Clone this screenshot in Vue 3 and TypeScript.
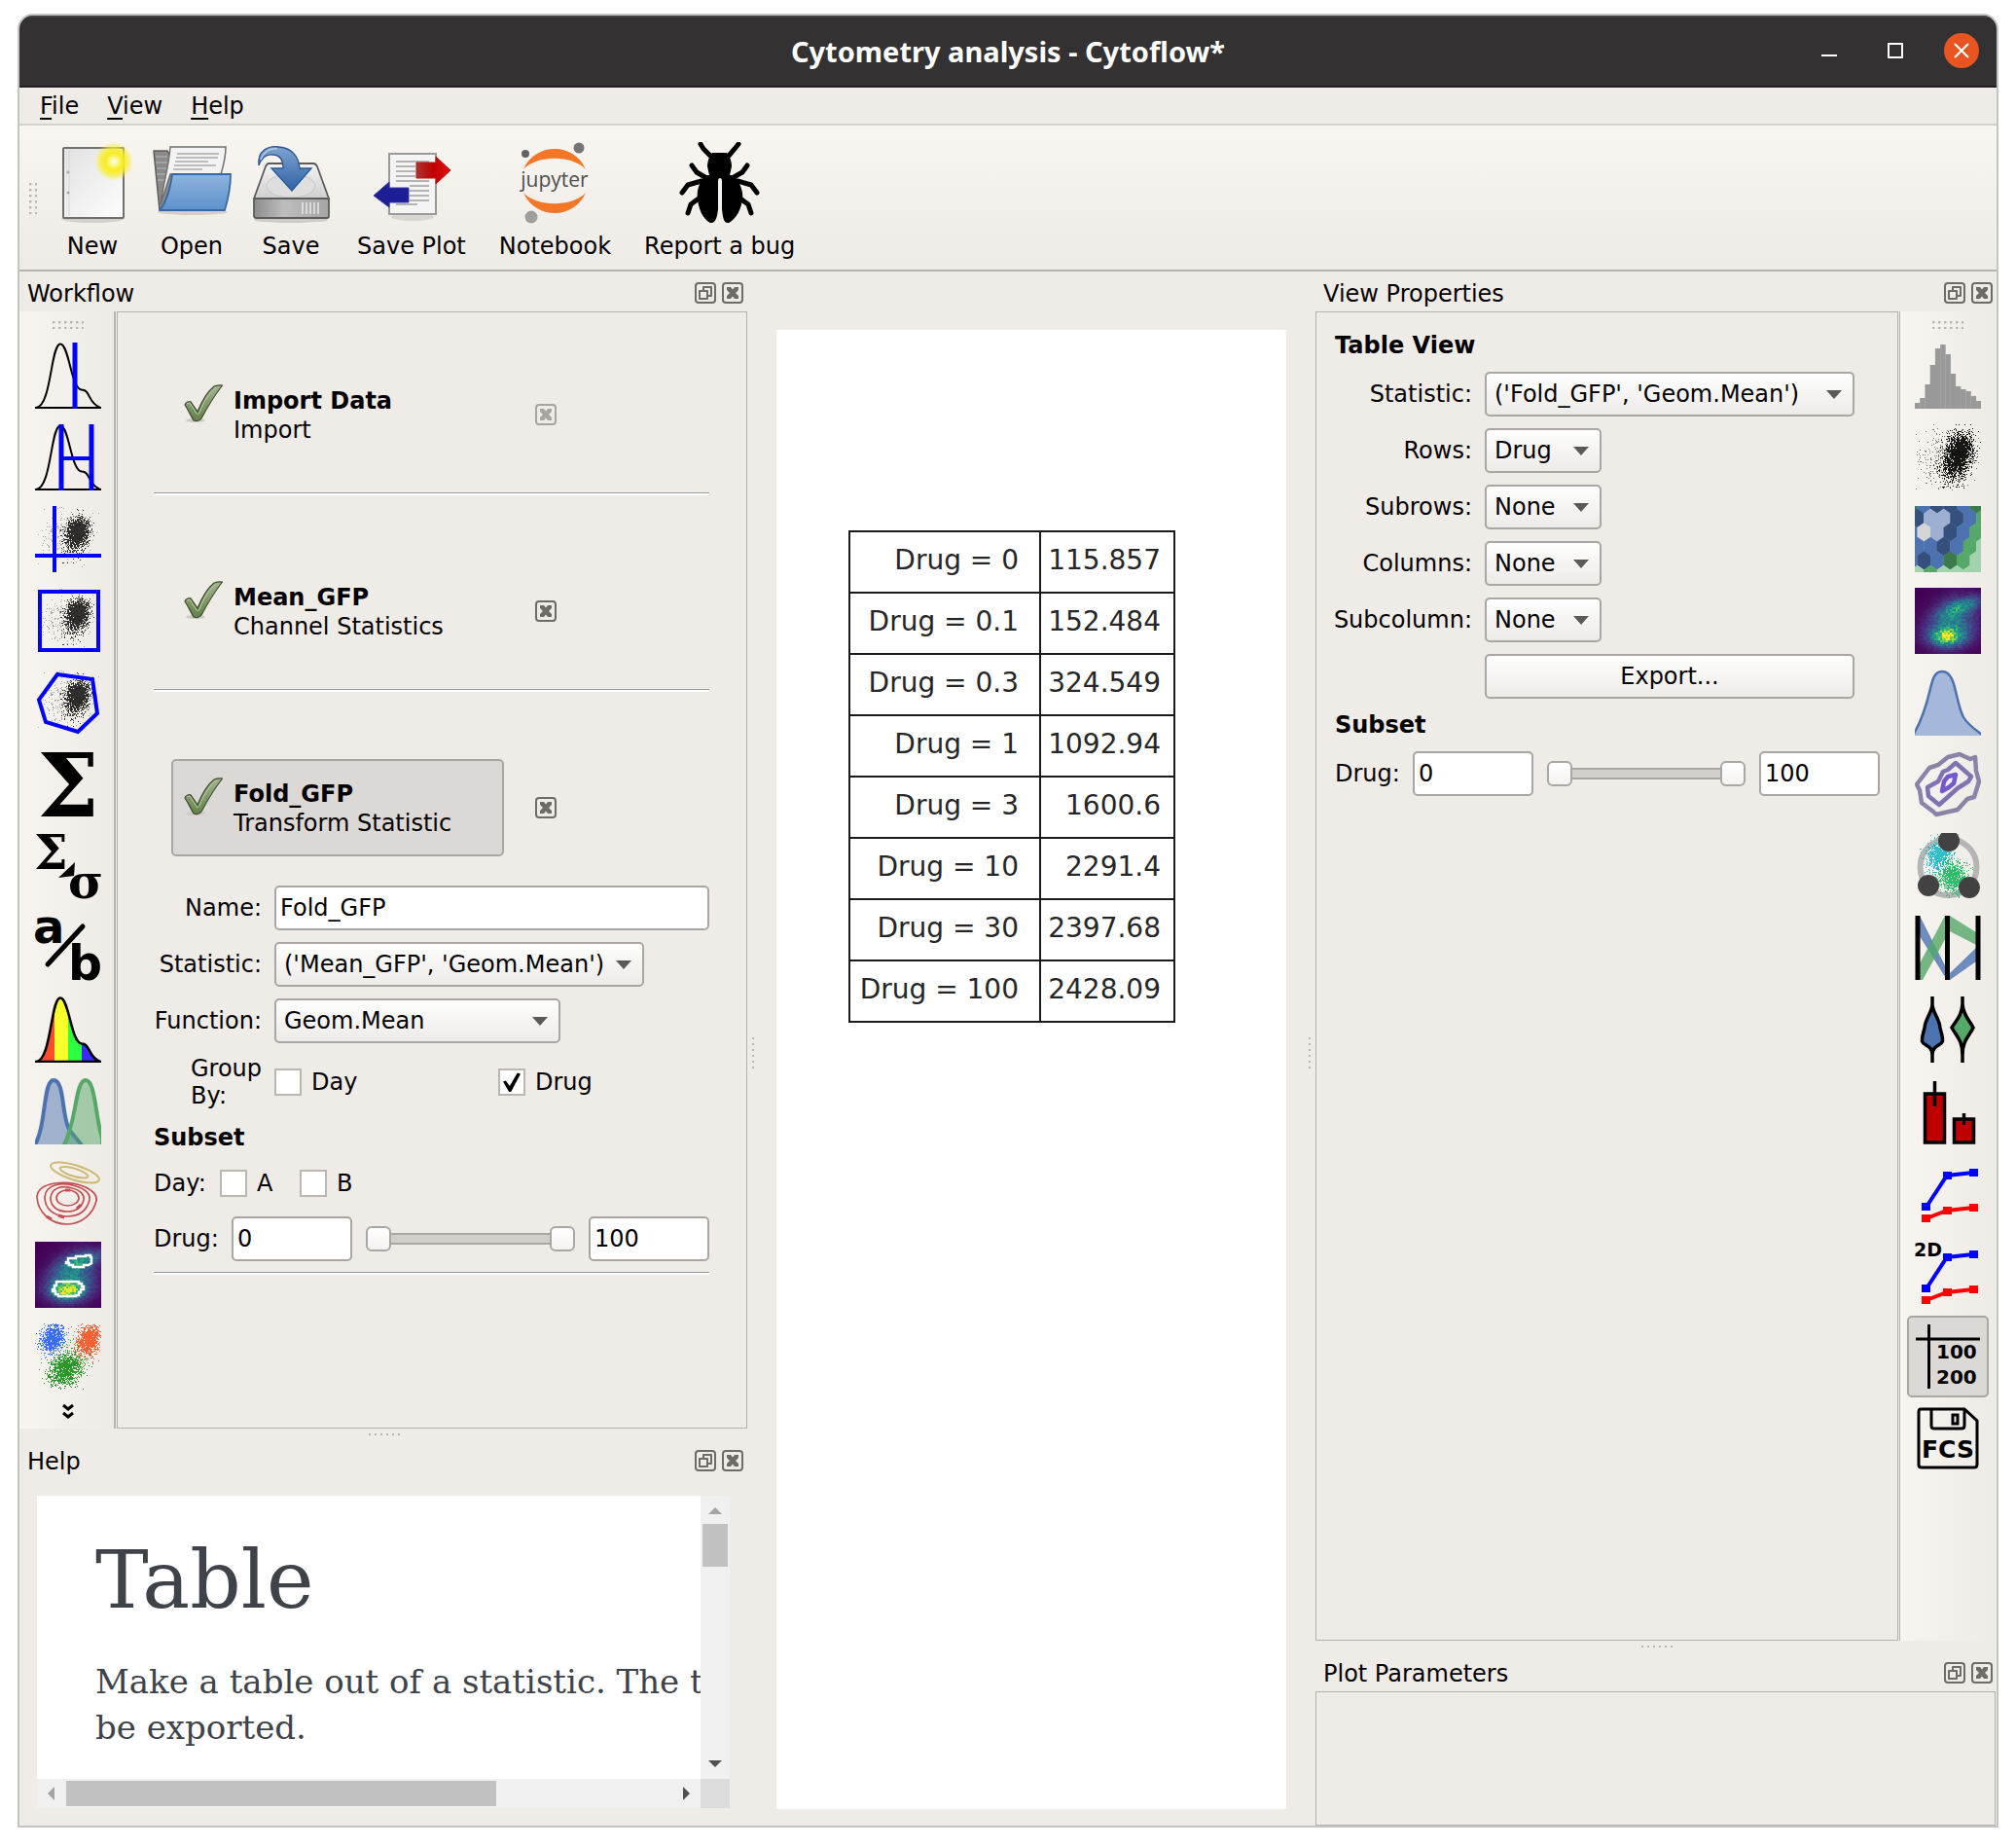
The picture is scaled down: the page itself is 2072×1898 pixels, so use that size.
<script setup lang="ts">
import { ref } from 'vue'

interface Step {
  title: string
  kind: string
  locked: boolean
}

const steps: Step[] = [
  { title: 'Import Data', kind: 'Import', locked: true },
  { title: 'Mean_GFP', kind: 'Channel Statistics', locked: false },
  { title: 'Fold_GFP', kind: 'Transform Statistic', locked: false },
]
const selectedStep = ref(2)

const results: [string, string][] = [
  ['Drug = 0', '115.857'],
  ['Drug = 0.1', '152.484'],
  ['Drug = 0.3', '324.549'],
  ['Drug = 1', '1092.94'],
  ['Drug = 3', '1600.6'],
  ['Drug = 10', '2291.4'],
  ['Drug = 30', '2397.68'],
  ['Drug = 100', '2428.09'],
]

const facets = [
  { id: 'rows', label: 'Rows:', value: 'Drug' },
  { id: 'subrows', label: 'Subrows:', value: 'None' },
  { id: 'columns', label: 'Columns:', value: 'None' },
  { id: 'subcolumn', label: 'Subcolumn:', value: 'None' },
]

const operations = [
  'Threshold', 'Range', 'Quad', 'Range 2D', 'Polygon', 'Channel Statistics', 'Transform Statistic',
  'Ratio', 'Bleedthrough', 'Gaussian Mixture 1D', 'Gaussian Mixture 2D', 'Density Gate', 'K-Means',
]
const views = [
  'Histogram', 'Scatter Plot', 'Hexbin', 'Density Plot', '1D Kernel Density', '2D Kernel Density', 'Radviz',
  'Parallel Coordinates', 'Violin Plot', 'Bar Chart', '1D Statistics', '2D Statistics', 'Table', 'Export FCS',
]

// Small deterministic generator so the event clouds look the same on each load.
function makeRandom(seed: number): () => number {
  let s = seed
  return () => {
    s = (s * 1664525 + 1013904223) % 4294967296
    return s / 4294967296
  }
}

function cloud(seed: number, n: number, cx: number, cy: number, sx: number, sy: number, tilt: number, size = 1): string {
  const rnd = makeRandom(seed)
  const gauss = () => Math.sqrt(-2 * Math.log(rnd() + 1e-9)) * Math.cos(2 * Math.PI * rnd())
  let d = ''
  for (let i = 0; i < n; i++) {
    const v = gauss()
    const x = cx + sx * gauss() - tilt * sx * v
    const y = cy + sy * v
    if (x < 0 || x > 67 || y < 0 || y > 67) continue
    d += `M${Math.round(x)} ${Math.round(y)}h${size}v${size}h-${size}z`
  }
  return d
}

const eventsDense = cloud(7, 900, 42, 30, 6, 9, 0.25) + cloud(8, 700, 45, 24, 5, 6, 0.1)
const eventsSparse = cloud(21, 300, 32, 32, 14, 12, 0.1)
const scatterDense = cloud(5, 1300, 42, 35, 7, 12, 0.25) + cloud(6, 1000, 47, 26, 6, 8, 0.1)
const scatterSparse = cloud(33, 380, 32, 34, 16, 14, 0.1)
const blueCloud = cloud(11, 900, 18, 15, 6, 7, 0.15)
const orangeCloud = cloud(12, 1100, 54, 17, 6, 8, 0.15)
const greenCloud = cloud(13, 1300, 31, 47, 8, 9, 0.2)
const cyanCloud = cloud(14, 900, 25, 21, 6, 8, 0.3)
const limeCloud = cloud(15, 1000, 39, 45, 7, 8, -0.1)

const viridis = [[68, 1, 84], [72, 40, 120], [62, 74, 137], [49, 104, 142], [38, 130, 142], [31, 158, 137], [53, 183, 121], [109, 205, 89], [180, 222, 44], [253, 231, 37]]
interface Cell { x: number; y: number; fill: string }
function density(seed: number): Cell[] {
  const rnd = makeRandom(seed)
  const cells: Cell[] = []
  const bump = (x: number, y: number, cx: number, cy: number, sx: number, sy: number, k: number) => {
    const u = x - cx
    const v = y - cy + k * u
    return Math.exp(-(u * u) / (2 * sx * sx) - (v * v) / (2 * sy * sy))
  }
  for (let y = 0; y < 68; y += 2) {
    for (let x = 0; x < 68; x += 2) {
      const base = 0.55 * bump(x, y, 32, 50, 9, 5, 0) + 0.3 * bump(x, y, 34, 48, 16, 9, 0)
        + 0.32 * bump(x, y, 48, 18, 15, 5, 0.3) + 0.38 * bump(x, y, 38, 32, 16, 15, 0.25)
      const t = Math.max(0, Math.min(0.999, base * (0.75 + 0.5 * rnd())))
      const p = t * 9
      const i = Math.floor(p)
      const c = viridis[i].map((a, k) => Math.round(a + (viridis[Math.min(9, i + 1)][k] - a) * (p - i)))
      cells.push({ x, y, fill: `rgb(${c.join(',')})` })
    }
  }
  return cells
}
const densityView = density(3)
const densityGate = density(9)

const histogram = [6, 11, 25, 45, 62, 66, 56, 36, 23, 20, 18, 13, 8]

const hexColours: Record<string, string> = { d: '#3b7a4a', b: '#4c72b0', n: '#35507d', l: '#9db0d3', y: '#d5d5d5', g: '#55a868', p: '#a3d2af' }
const hexRows = ['dbnnbd', 'nllnbg', 'bylnbg', 'bbnbgp', 'bnbdgp', 'pgpppp']
const hexes = hexRows.flatMap((row, r) => [...row].map((c, i) => {
  const cx = (r % 2 ? 2.6 : -4.1) + i * 13.5
  const cy = -2 + r * 14.5
  return {
    fill: hexColours[c],
    points: `${cx},${cy - 9.8} ${cx + 6.9},${cy - 4.9} ${cx + 6.9},${cy + 4.9} ${cx},${cy + 9.8} ${cx - 6.9},${cy + 4.9} ${cx - 6.9},${cy - 4.9}`,
  }
}))

const bell = 'M1 67C17 66 16 1.500 26 1.500C35 1.500 37 48 48 48.500C57 48.500 54 62 67 67'
</script>

<template>
  <div class="page">
    <svg class="defs" aria-hidden="true">
      <defs>
        <symbol id="ic-close" viewBox="0 0 22 22">
          <rect x="1" y="1" width="20" height="20" rx="3" fill="none" stroke="currentColor" stroke-width="2" />
          <path d="M5 5h4l2 2.500 2-2.500h4v3l-3 3 3 3v3h-4l-2-2.500-2 2.500h-4v-3l3-3-3-3z" fill="currentColor" />
        </symbol>
        <symbol id="ic-float" viewBox="0 0 22 22">
          <rect x="1" y="1" width="20" height="20" rx="3" fill="none" stroke="currentColor" stroke-width="2" />
          <path d="M9 8V5h8v9h-3M5 9h8v8H5z" fill="none" stroke="currentColor" stroke-width="2" stroke-linejoin="round" />
        </symbol>
        <symbol id="ic-check" viewBox="0 0 40 40">
          <ellipse cx="12" cy="37" rx="10" ry="2" fill="#cfccc8" />
          <path d="M1 21C2 18 6 17 7 18L14 28C19 16 26 6 31 2C34 1 37 .800 39.500 1C31 12 26 20 18 35C16 38 13 38 10 37C7 32 5 27 1 21Z" fill="url(#checkFill)" stroke="#3b4a30" stroke-width="1.200" />
          <path d="M3 20l3-1 7 11c1 1 2 1 3-1 5-12 10-20 17-26" fill="none" stroke="#b9caa6" stroke-width="1" />
        </symbol>
        <linearGradient id="checkFill" x1="0" y1="0" x2="0" y2="1">
          <stop offset="0" stop-color="#a3b48e" /><stop offset="1" stop-color="#648248" />
        </linearGradient>
        <linearGradient id="paper" x1="0" y1="0" x2="1" y2="1">
          <stop offset="0" stop-color="#e2e2e2" /><stop offset="1" stop-color="#fdfdfd" />
        </linearGradient>
        <radialGradient id="glow">
          <stop offset="0" stop-color="#fff" /><stop offset=".2" stop-color="#fdf78a" /><stop offset=".45" stop-color="#f9ec1e" /><stop offset=".7" stop-color="#f8ee30" stop-opacity=".75" /><stop offset="1" stop-color="#f8ee30" stop-opacity="0" />
        </radialGradient>
        <linearGradient id="folder" x1="0" y1="0" x2="0" y2="1">
          <stop offset="0" stop-color="#8db4de" /><stop offset="1" stop-color="#5d91cb" />
        </linearGradient>
        <linearGradient id="drive" x1="0" y1="0" x2="0" y2="1">
          <stop offset="0" stop-color="#f4f4f4" /><stop offset="1" stop-color="#cfcfcf" />
        </linearGradient>
        <linearGradient id="driveFront" x1="0" y1="0" x2="1" y2="0">
          <stop offset="0" stop-color="#8c8c8c" /><stop offset=".4" stop-color="#bdbdbd" /><stop offset="1" stop-color="#a5a5a5" />
        </linearGradient>
        <linearGradient id="arrowBlue" x1="0" y1="0" x2="0" y2="1">
          <stop offset="0" stop-color="#7ea4d0" /><stop offset="1" stop-color="#2f62a6" />
        </linearGradient>
        <linearGradient id="redArrow" x1="0" y1="0" x2="1" y2="0">
          <stop offset="0" stop-color="#a33" /><stop offset=".5" stop-color="#c00000" /><stop offset="1" stop-color="#e01010" />
        </linearGradient>
        <clipPath id="tile"><rect width="68" height="68" /></clipPath>
        <clipPath id="bellClip"><path :d="bell + 'z'" /></clipPath>
      </defs>
    </svg>

    <div class="window">
      <header class="titlebar">
        <h1>Cytometry analysis - Cytoflow*</h1>
        <div class="winbtns">
          <button type="button" aria-label="Minimize"><svg width="36" height="38" viewBox="0 0 36 38"><path d="M10 24h16" stroke="#fff" stroke-width="2" /></svg></button>
          <button type="button" aria-label="Maximize"><svg width="36" height="38" viewBox="0 0 36 38"><rect x="11" y="12" width="14" height="14" fill="none" stroke="#fff" stroke-width="2" /></svg></button>
          <button type="button" aria-label="Close"><svg width="36" height="38" viewBox="0 0 36 38"><circle cx="18" cy="19" r="18" fill="#e95420" /><path d="M11 12l14 14M25 12l-14 14" stroke="#fff" stroke-width="2.200" /></svg></button>
        </div>
      </header>

      <nav class="menubar">
        <a href="#"><u>F</u>ile</a>
        <a href="#"><u>V</u>iew</a>
        <a href="#"><u>H</u>elp</a>
      </nav>

      <div class="toolbar">
        <span class="grip tall"></span>
        <button type="button">
          <svg width="84" height="84" viewBox="0 0 84 84">
            <ellipse cx="42" cy="79" rx="32" ry="4" fill="#d3d0cc" />
            <rect x="12" y="6" width="62" height="72" rx="1" fill="url(#paper)" stroke="#6f6f6f" stroke-width="2" />
            <path d="M18 8v68" stroke="#d5d5d5" /><circle cx="17" cy="31" r="1.500" fill="#aaa" /><circle cx="17" cy="52" r="1.500" fill="#aaa" />
            <circle cx="64" cy="20" r="20" fill="url(#glow)" />
          </svg>
          <span>New</span>
        </button>
        <button type="button">
          <svg width="84" height="84" viewBox="0 0 84 84">
            <ellipse cx="43" cy="72" rx="36" ry="3" fill="#d3d0cc" />
            <path d="M3 9h14l3 5h10l-18 56H9z" fill="#8b8b8b" stroke="#5c5c5c" stroke-width="1.500" />
            <path d="M5 15h12M5 21h12M6 27h12M6 33h11M7 39h9" stroke="#b9b9b9" />
            <path d="M20 5h57c0 10-2 18-5 28H20L10 64C13 42 19 22 20 5z" fill="#f3f3f3" stroke="#707070" stroke-width="1.500" />
            <path d="M27 12h43M26 16h43M25 20h34M24 24h43M23 28h30" stroke="#aaa" stroke-width="1.500" />
            <path d="M22 33h60c0 13-3 27-6 37H9c7-8 11-23 13-37z" fill="url(#folder)" stroke="#3568a5" stroke-width="1.800" stroke-linejoin="round" />
          </svg>
          <span>Open</span>
        </button>
        <button type="button">
          <svg width="84" height="84" viewBox="0 0 84 84">
            <ellipse cx="42" cy="80" rx="38" ry="3" fill="#cfccc8" />
            <path d="M19 22h46c2 0 3 1 4 3l12 33H4l12-33c1-2 2-3 3-3z" fill="url(#drive)" stroke="#5c5c5c" stroke-width="1.800" />
            <ellipse cx="42" cy="45" rx="25" ry="12" fill="#dedede" stroke="#c5c5c5" />
            <rect x="4" y="58" width="77" height="20" rx="2" fill="url(#driveFront)" stroke="#5c5c5c" stroke-width="1.800" />
            <path d="M54 62v12M58 62v12M62 62v12M66 62v12M70 62v12" stroke="#e9e9e9" stroke-width="1.500" />
            <path d="M9 24C7 9 19 3 30 5c12 1 20 9 21 22h12L43 50 22 27h12c0-9-4-14-11-14-7-1-11 3-14 11z" fill="url(#arrowBlue)" stroke="#2c578f" stroke-width="1.300" />
            <path d="M11 18c3-8 9-12 17-11" fill="none" stroke="#b3cae6" stroke-width="1.500" />
          </svg>
          <span>Save</span>
        </button>
        <button type="button">
          <svg width="84" height="84" viewBox="0 0 84 84">
            <ellipse cx="43" cy="77" rx="22" ry="4" fill="#d9d6d2" />
            <rect x="19" y="12" width="48" height="62" fill="#f4f4f4" stroke="#999" stroke-width="2" />
            <path d="M26 20h34M26 25h20M26 30h20M26 35h20M26 40h34M40 45h20M40 50h20M40 55h20M40 60h20M26 64h22" stroke="#b3b3b3" stroke-width="2" />
            <path d="M47 21h20v-6l15 14-15 14v-6H47z" fill="url(#redArrow)" stroke="#b01818" />
            <path d="M39 47H19v-6L3 55l16 12v-5h20z" fill="#1d1d96" stroke="#3838a8" />
          </svg>
          <span>Save Plot</span>
        </button>
        <button type="button">
          <svg width="84" height="84" viewBox="0 0 84 84">
            <path d="M10 28C22 0 62 0 74 28C60 13 24 13 10 28z" fill="#f37726" />
            <path d="M10 52C22 80 62 80 74 52C60 67 24 67 10 52z" fill="#f37726" />
            <circle cx="12" cy="12" r="4" fill="#616262" /><circle cx="67" cy="6" r="5.500" fill="#767677" /><circle cx="18" cy="77" r="6.500" fill="#9e9e9e" />
            <text x="42" y="46" text-anchor="middle" font-family="Open Sans, sans-serif" font-size="21" fill="#4e4e4e">jupyter</text>
          </svg>
          <span>Notebook</span>
        </button>
        <button type="button">
          <svg width="84" height="84" viewBox="0 0 84 84">
            <path d="M22 2l3 5 7 7M61 2l-4 5-6 7" fill="none" stroke="#000" stroke-width="5" stroke-linecap="round" />
            <path d="M13 24l5 7 12 7M70 24l-5 7-12 7M3 52l6-8 14-4M80 52l-6-8-14-4M9 73l3-9 12-9M74 73l-3-9-12-9" fill="none" stroke="#000" stroke-width="5" stroke-linecap="round" stroke-linejoin="round" />
            <path d="M34 11h15c3 3 5 9 5 14l-2 9H31l-2-9c0-5 2-11 5-14z" fill="#000" />
            <path d="M28 34h27c9 8 11 18 10 25-1 9-6 20-14 24-5 1-6-5-7-14V40c0-4-4-4-4 0v29c-1 9-3 15-8 14-8-4-12-15-13-24-1-7 0-17 9-25z" fill="#000" />
          </svg>
          <span>Report a bug</span>
        </button>
      </div>

      <main class="body">
        <div class="leftdock">
          <section class="grow">
            <div class="docktitle">
              <h2>Workflow</h2>
              <button type="button" aria-label="Float Workflow"><svg><use href="#ic-float" /></svg></button>
              <button type="button" aria-label="Close Workflow"><svg><use href="#ic-close" /></svg></button>
            </div>
            <div class="dockrow">
              <div class="sidebar leftbar">
                <span class="grip wide"></span>
                <button v-for="(name, i) in operations" :key="name" type="button" :aria-label="name">
                  <svg width="68" height="68" viewBox="0 0 68 68">
                    <g v-if="i === 0">
                      <path :d="bell + 'M0 67h68'" fill="none" stroke="#000" stroke-width="2" />
                      <path d="M41 0v68" stroke="#00f" stroke-width="5" />
                    </g>
                    <g v-else-if="i === 1">
                      <path :d="bell + 'M0 67h68'" fill="none" stroke="#000" stroke-width="2" />
                      <path d="M27 0v68M58 0v68" stroke="#00f" stroke-width="5" />
                      <path d="M27 35h31" stroke="#00f" stroke-width="4" />
                    </g>
                    <g v-else-if="i < 5">
                      <path :d="eventsSparse" opacity=".3" />
                      <path :d="eventsDense" opacity=".8" />
                      <path v-if="i === 2" d="M20 0v68M0 51h68" stroke="#00f" stroke-width="4" />
                      <rect v-else-if="i === 3" x="5" y="4" width="60" height="60" fill="none" stroke="#00f" stroke-width="4" />
                      <path v-else d="M23 5l36 5 5 35-20 19-33-10-7-23z" fill="none" stroke="#00f" stroke-width="4" />
                    </g>
                    <text v-else-if="i === 5" x="34" y="67" text-anchor="middle" class="serif bold" font-size="90">Σ</text>
                    <g v-else-if="i === 6">
                      <text x="-1" y="37" class="serif bold" font-size="49">Σ</text>
                      <path d="M24 46l17-16-1 14z" />
                      <text x="34" y="67" class="serif bold" font-size="49">σ</text>
                    </g>
                    <g v-else-if="i === 7">
                      <text x="-2" y="29" class="sans bold" font-size="48">a</text>
                      <text x="34" y="67" class="sans bold" font-size="49">b</text>
                      <path d="M13 51L49 12" stroke="#000" stroke-width="5" stroke-linecap="round" />
                    </g>
                    <g v-else-if="i === 8">
                      <g clip-path="url(#bellClip)">
                        <rect width="20" height="68" fill="#ff4a2b" /><rect x="20" width="14" height="68" fill="#f8ff2b" />
                        <rect x="34" width="14" height="68" fill="#2bff40" /><rect x="48" width="20" height="68" fill="#3a2bff" />
                      </g>
                      <path :d="bell + 'M0 67h68'" fill="none" stroke="#000" stroke-width="2.500" />
                    </g>
                    <g v-else-if="i === 9" stroke-width="4">
                      <path d="M-1 70C12 50 8 2 19 2C31 2 27 42 36 54L49 70" fill="#4c72b0" fill-opacity=".5" stroke="#4c72b0" />
                      <path d="M29 70C43 46 41 2 52 2C62 2 62 40 69 62V70" fill="#55a868" fill-opacity=".5" stroke="#55a868" />
                    </g>
                    <g v-else-if="i === 10" fill="none">
                      <g stroke="#ccb974" stroke-width="2" transform="rotate(17 41 13)"><ellipse cx="41" cy="13" rx="26" ry="7.500" /><ellipse cx="40" cy="13" rx="15" ry="4" /></g>
                      <g stroke="#c44e52" stroke-width="1.700">
                        <path d="M2 38C3 22 34 20 52 28C62 33 64 38 63 42C60 55 48 66 33 66C16 66 3 54 2 38z" />
                        <path d="M10 38C11 25 28 22 42 27C53 30 57 36 56 41C53 53 44 58 33 58C18 58 10 49 10 38z" />
                        <path d="M16 39C17 28 28 26 38 29C47 31 51 36 50 41C48 49 42 53 33 53C22 53 16 47 16 39z" />
                        <ellipse cx="33.500" cy="39" rx="11.500" ry="8" />
                        <path d="M12 58l5 3M24 57l6 2M43 50l4-4M31 31h5" stroke-width="3" />
                      </g>
                    </g>
                    <g v-else-if="i === 11">
                      <g shape-rendering="crispEdges"><rect v-for="(c, k) in densityGate" :key="k" :x="c.x" :y="c.y" width="2" height="2" :fill="c.fill" /></g>
                      <path d="M32 21h2v-4h8v-2h10v-1h5v2h1v6l-3 2h-5v2H39v-2h-4v-2h-3z M18 49h2v-4h2v-4h23v2h3v3h2v3h-3v3h-2v3h-3v1H24v-2h-3v-3h-3z" fill="none" stroke="#fff" stroke-width="2.500" />
                    </g>
                    <g v-else>
                      <path :d="blueCloud" fill="#0b4dff" opacity=".8" /><path :d="orangeCloud" fill="#ff3c05" opacity=".8" /><path :d="greenCloud" fill="#078a07" opacity=".85" />
                    </g>
                  </svg>
                </button>
                <button type="button" class="more" aria-label="More operations">
                  <svg width="12" height="18" viewBox="0 0 12 18"><path d="M1 2l5 4 5-4M1 10l5 4 5-4" fill="none" stroke="#000" stroke-width="3" /></svg>
                </button>
              </div>

              <div class="panel workflow">
                <template v-for="(s, i) in steps" :key="s.title">
                  <div class="step">
                    <button type="button" class="stepbtn" :class="{ selected: i === selectedStep }" @click="selectedStep = i">
                      <svg width="40" height="40"><use href="#ic-check" /></svg>
                      <span><b>{{ s.title }}</b><br>{{ s.kind }}</span>
                    </button>
                    <button type="button" class="close" :disabled="s.locked" :aria-label="'Remove ' + s.title"><svg><use href="#ic-close" /></svg></button>
                  </div>
                  <hr v-if="i < 2">
                </template>

                <form class="form opform" @submit.prevent>
                  <label for="op-name">Name:</label>
                  <input id="op-name" type="text" value="Fold_GFP">
                  <label for="op-stat">Statistic:</label>
                  <span class="combo stat"><select id="op-stat"><option>('Mean_GFP', 'Geom.Mean')</option></select></span>
                  <label for="op-fn">Function:</label>
                  <span class="combo fn"><select id="op-fn"><option>Geom.Mean</option></select></span>
                  <span class="groupby">Group By:</span>
                  <div class="pair">
                    <label class="tick"><input type="checkbox">Day</label>
                    <label class="tick"><input type="checkbox" checked>Drug</label>
                  </div>
                </form>
                <h3 class="opsubset">Subset</h3>
                <div class="dayrow">
                  <span>Day:</span>
                  <label class="tick"><input type="checkbox">A</label>
                  <label class="tick"><input type="checkbox">B</label>
                </div>
                <div class="rangerow oprange">
                  <label for="op-min">Drug:</label>
                  <input id="op-min" type="text" value="0">
                  <div class="slider">
                    <input type="range" min="0" max="100" value="0" aria-label="Drug minimum">
                    <input type="range" min="0" max="100" value="100" aria-label="Drug maximum">
                  </div>
                  <input type="text" value="100" aria-label="Drug upper bound">
                </div>
                <hr class="last">
              </div>
            </div>
          </section>

          <div class="hsplit"><span></span></div>

          <section class="help">
            <div class="docktitle">
              <h2>Help</h2>
              <button type="button" aria-label="Float Help"><svg><use href="#ic-float" /></svg></button>
              <button type="button" aria-label="Close Help"><svg><use href="#ic-close" /></svg></button>
            </div>
            <div class="browser">
              <article>
                <h2>Table</h2>
                <p>Make a table out of a statistic. The t<br>be exported.</p>
              </article>
              <div class="vbar"><i class="arrow up"></i><i class="thumb"></i><i class="arrow down"></i></div>
              <div class="hbar"><i class="arrow left"></i><i class="thumb"></i><i class="arrow right"></i></div>
              <div class="corner"></div>
            </div>
          </section>
        </div>

        <div class="vsplit"><span></span></div>

        <div class="central">
          <div class="canvas">
            <table>
              <tbody>
                <tr v-for="r in results" :key="r[0]">
                  <th scope="row">{{ r[0] }}</th>
                  <td>{{ r[1] }}</td>
                </tr>
              </tbody>
            </table>
          </div>
        </div>

        <div class="vsplit"><span></span></div>

        <div class="rightdock">
          <section class="grow">
            <div class="docktitle">
              <h2>View Properties</h2>
              <button type="button" aria-label="Float View Properties"><svg><use href="#ic-float" /></svg></button>
              <button type="button" aria-label="Close View Properties"><svg><use href="#ic-close" /></svg></button>
            </div>
            <div class="dockrow">
              <div class="panel props">
                <h3>Table View</h3>
                <form class="form viewform" @submit.prevent>
                  <label for="v-stat">Statistic:</label>
                  <span class="combo"><select id="v-stat"><option>('Fold_GFP', 'Geom.Mean')</option></select></span>
                  <template v-for="f in facets" :key="f.id">
                    <label :for="f.id">{{ f.label }}</label>
                    <span class="combo small"><select :id="f.id"><option>{{ f.value }}</option></select></span>
                  </template>
                  <button type="button" class="export">Export...</button>
                </form>
                <h3>Subset</h3>
                <div class="rangerow viewrange">
                  <label for="v-min">Drug:</label>
                  <input id="v-min" type="text" value="0">
                  <div class="slider">
                    <input type="range" min="0" max="100" value="0" aria-label="Drug minimum">
                    <input type="range" min="0" max="100" value="100" aria-label="Drug maximum">
                  </div>
                  <input type="text" value="100" aria-label="Drug upper bound">
                </div>
              </div>

              <div class="sidebar rightbar">
                <span class="grip wide"></span>
                <button v-for="(name, i) in views" :key="name" type="button" :aria-label="name" :class="{ selected: i === 12 }">
                  <svg width="68" height="68" viewBox="0 0 68 68">
                    <g v-if="i === 0" fill="#999">
                      <rect v-for="(h, k) in histogram" :key="k" :x="k * 5.23" :y="68 - h" width="5.5" :height="h" />
                    </g>
                    <g v-else-if="i === 1"><path :d="scatterSparse" opacity=".5" /><path :d="scatterDense" opacity=".9" /></g>
                    <g v-else-if="i === 2" clip-path="url(#tile)"><polygon v-for="(h, k) in hexes" :key="k" :points="h.points" :fill="h.fill" /></g>
                    <g v-else-if="i === 3" shape-rendering="crispEdges"><rect v-for="(c, k) in densityView" :key="k" :x="c.x" :y="c.y" width="2" height="2" :fill="c.fill" /></g>
                    <g v-else-if="i === 4">
                      <path d="M-1 66C20 30 13 2 28 2C43 2 41 32 50 49C54 56 61 61 69 67V70H-1z" fill="#a6b8d9" />
                      <path d="M-1 66C20 30 13 2 28 2C43 2 41 32 50 49C54 56 61 61 69 67" fill="none" stroke="#4c72b0" stroke-width="2.500" />
                    </g>
                    <g v-else-if="i === 5" fill="none" stroke-width="4.500" stroke-linejoin="round">
                      <path d="M46 3L57 8L62 6L63 20L66 31L61 47L54 49L44 60L22 65L19 62L7 53L5 40L2 34L15 17L24 14L34 6z" stroke="#8c84a8" />
                      <path d="M42 12L58 26L55 31L44 38L35 46L25 55L14 46L13 37L24 31L29 21L34 19z" stroke="#8172b2" />
                      <path d="M34 26L42 24L40 33L35 37L28 41L30 31z" stroke="#7458cf" />
                    </g>
                    <g v-else-if="i === 6">
                      <circle cx="34.500" cy="35" r="29" fill="none" stroke="#b5b5b5" stroke-width="6" />
                      <path :d="cyanCloud" fill="#0bb5c9" opacity=".85" /><path :d="limeCloud" fill="#0bb455" opacity=".85" />
                      <g fill="#424242"><circle cx="35" cy="8" r="11" /><circle cx="14" cy="54" r="11" /><circle cx="56" cy="56" r="11" /></g>
                    </g>
                    <g v-else-if="i === 7">
                      <g fill="#4c72b0" opacity=".8"><path d="M5 1L33 56V67L5 22zM36 60L63 34V48L36 67z" /></g>
                      <g fill="#55a868" opacity=".8"><path d="M5 50L31 1L34 20L8 67H5zM36 1L63 18V31L36 17z" /></g>
                      <path d="M3 1v66M33.500 1v66M65 1v66" stroke="#000" stroke-width="5" />
                    </g>
                    <g v-else-if="i === 8" stroke="#000" stroke-width="3.500">
                      <path d="M18 0V8C18 16 11 22 10 32C9 38 7 40 7.500 46C9 51 18 50 18 60V68V60C18 50 27 51 28.500 46C29 40 27 38 26 32C25 22 18 16 18 8z" fill="#4c72b0" />
                      <path d="M49 0V8C48 20 43 24 38 32C43 41 49 45 49 60V68V60C49 45 56 41 60 32C56 24 50 20 49 8z" fill="#55a868" />
                    </g>
                    <g v-else-if="i === 9" stroke="#000" stroke-width="3.500" fill="#c00000">
                      <rect x="10.500" y="16" width="20" height="50" /><rect x="40.500" y="42" width="20" height="24" />
                      <path d="M20.500 3v26M50.500 36v12" />
                    </g>
                    <g v-else-if="i < 12" fill="none" stroke-width="4">
                      <text v-if="i === 11" x="-1" y="15" class="sans bold" font-size="19" fill="#000">2D</text>
                      <path d="M12 48L33 16L60 13" stroke="#00f" />
                      <path d="M12 60L33 52L60 49" stroke="#f00" />
                      <path d="M7 48h9M29 16h9M56 13h9" stroke="#00f" stroke-width="8" />
                      <path d="M7 60h9M29 52h9M56 49h9" stroke="#f00" stroke-width="8" />
                    </g>
                    <g v-else-if="i === 12">
                      <path d="M1 16h66M14.500 1v66" stroke="#000" stroke-width="3" />
                      <text x="22" y="36" class="sans bold" font-size="20">100</text>
                      <text x="22" y="62" class="sans bold" font-size="20">200</text>
                    </g>
                    <g v-else>
                      <path d="M6 4H51L64 16V61Q64 64 61 64H7Q4 64 4 61V7Q4 4 6 4zM17 4V21Q17 24 20 24H48Q51 24 51 21V4M39 10h5v9h-5z" fill="none" stroke="#000" stroke-width="3" />
                      <text x="34" y="54" text-anchor="middle" class="sans bold" font-size="25">FCS</text>
                    </g>
                  </svg>
                </button>
              </div>
            </div>
          </section>

          <div class="hsplit"><span></span></div>

          <section class="plot">
            <div class="docktitle">
              <h2>Plot Parameters</h2>
              <button type="button" aria-label="Float Plot Parameters"><svg><use href="#ic-float" /></svg></button>
              <button type="button" aria-label="Close Plot Parameters"><svg><use href="#ic-close" /></svg></button>
            </div>
            <div class="panel"></div>
          </section>
        </div>
      </main>
    </div>
  </div>
</template>

<style>
body {
  background: #fff;
}
</style>

<style scoped>
* {
  box-sizing: border-box;
}
.page {
  display: flex;
  min-height: 100vh;
  padding: 14px 18px 20px;
  font: 24px/30px "DejaVu Sans", sans-serif;
  color: #000;
}
.defs {
  position: absolute;
  width: 0;
  height: 0;
}
button, input, select {
  font: inherit;
  color: inherit;
  margin: 0;
}
button {
  background: none;
  border: 0;
  padding: 0;
}
svg {
  display: block;
  flex: none;
}
h1, h2, h3, p, hr {
  margin: 0;
}
h2 {
  font-size: 24px;
  font-weight: normal;
}
h3 {
  font-size: 24px;
}
.serif {
  font-family: "DejaVu Serif", serif;
}
.sans {
  font-family: "DejaVu Sans", sans-serif;
}
.bold {
  font-weight: bold;
}
.window {
  flex: 1;
  display: flex;
  flex-direction: column;
  border: 2px solid #c4c4c4;
  border-radius: 16px 16px 0 0;
  background: #efebe7;
  overflow: hidden;
}

.titlebar {
  display: grid;
  grid-template-columns: 1fr auto 1fr;
  align-items: center;
  height: 74px;
  padding: 0 18px 2px;
  background: #333132;
  border-top: 2px solid #454344;
  border-bottom: 2px solid #231c20;
  color: #fff;
}
.titlebar h1 {
  grid-column: 2;
  padding-top: 2px;
  font: bold 29px/40px "Noto Sans", sans-serif;
}
.winbtns {
  display: flex;
  justify-content: flex-end;
  gap: 32px;
}
.menubar {
  display: flex;
  gap: 29px;
  height: 39px;
  padding: 4px 21px 0;
  border-bottom: 2px solid #d5d1cc;
}
.menubar a {
  color: inherit;
  text-decoration: none;
}
.menubar u {
  text-decoration-thickness: 2px;
  text-underline-offset: 4px;
}
.toolbar {
  display: flex;
  align-items: flex-start;
  height: 150px;
  padding: 17px 10px 0;
  background: linear-gradient(#f9f6f1, #eeeae6);
  border-bottom: 2px solid #b6b2ae;
}
.toolbar button {
  display: flex;
  flex-direction: column;
  align-items: center;
  gap: 8px;
  min-width: 102px;
  padding: 0 17px;
  white-space: nowrap;
}
.toolbar button svg {
  margin: 0 -8px;
}
.grip.tall {
  width: 8px;
  height: 32px;
  margin: 42px 6px 0 0;
  background: radial-gradient(circle at 1px 1px, #b9b5b1 1px, transparent 2px) 0 0 / 6px 6px;
}
.grip.wide {
  width: 32px;
  height: 8px;
  margin: 10px 0 6px;
  background: radial-gradient(circle at 1px 1px, #b9b5b1 1px, transparent 2px) 0 0 / 6px 6px;
}

.body {
  flex: 1;
  display: flex;
}
.leftdock, .rightdock {
  display: flex;
  flex-direction: column;
}
.leftdock {
  width: 748px;
}
.rightdock {
  width: 700px;
}
.grow {
  flex: 1;
  display: flex;
  flex-direction: column;
}
.docktitle {
  display: flex;
  align-items: center;
  gap: 6px;
  height: 41px;
  padding: 2px 4px 0 8px;
}
.docktitle h2 {
  flex: 1;
  padding-top: 2px;
}
.docktitle svg, .close svg {
  width: 22px;
  height: 22px;
  color: #6e6c68;
}
.dockrow {
  flex: 1;
  display: flex;
  gap: 1px;
}
.panel {
  flex: 1;
  border: 1px solid #b5b1ad;
}
.sidebar {
  display: flex;
  flex-direction: column;
  align-items: center;
  background: linear-gradient(90deg, #f8f5f0, #eeeae6);
}
.sidebar button {
  display: grid;
  place-items: center;
  width: 84px;
  height: 84px;
  border: 2px solid transparent;
  border-radius: 5px;
}
.sidebar button.selected {
  background: #dcd8d5;
  border-color: #aaa6a3;
}
.sidebar svg:has(text) {
  overflow: visible;
}
.sidebar .more {
  height: 30px;
}
.leftbar {
  width: 99px;
  padding-left: 3px;
  border-right: 2px solid #b6b2ae;
}
.rightbar {
  width: 100px;
  padding-right: 2px;
  border-left: 1px solid #b6b2ae;
}
.vsplit {
  width: 12px;
  display: grid;
  place-items: center;
  padding-top: 10px;
}
.vsplit span {
  width: 2px;
  height: 34px;
  background: repeating-linear-gradient(#b9b5b1 0 2px, transparent 2px 6px);
}
.hsplit {
  height: 11px;
  display: grid;
  place-items: center;
  padding-left: 4px;
}
.hsplit span {
  width: 34px;
  height: 2px;
  background: repeating-linear-gradient(90deg, #b9b5b1 0 2px, transparent 2px 6px);
}

.workflow {
  padding: 55px 38px 0 37px;
}
.step {
  display: flex;
  align-items: center;
  gap: 32px;
  padding-left: 18px;
}
.stepbtn {
  display: flex;
  align-items: center;
  gap: 11px;
  width: 342px;
  height: 100px;
  padding-left: 11px;
  border: 2px solid transparent;
  border-radius: 5px;
  text-align: left;
}
.stepbtn svg {
  margin-bottom: 22px;
}
.stepbtn span {
  padding-top: 2px;
}
.stepbtn.selected {
  background: #dcd8d5;
  border-color: #aaa6a3;
}
.close:disabled {
  opacity: .55;
}
hr {
  height: 3px;
  margin: 30px 0 69px;
  border: 0;
  border-top: 1px solid #999;
  background: #fff;
}
hr.last {
  margin: 11px 0 0;
}
.form {
  display: grid;
  column-gap: 13px;
  row-gap: 12px;
  align-items: center;
}
.form > label {
  justify-self: end;
}
.opform {
  grid-template-columns: 111px 1fr;
  margin-top: 30px;
}
.viewform {
  grid-template-columns: 141px 380px;
  margin: 12px 0;
}
input[type="text"] {
  width: 100%;
  height: 46px;
  padding: 0 4px;
  border: 2px solid #aaa6a3;
  border-radius: 5px;
  background: #fff;
}
.combo {
  position: relative;
  display: block;
}
.combo.stat {
  width: 380px;
}
.combo.fn {
  width: 294px;
}
.combo.small {
  width: 120px;
}
.combo::after {
  content: "";
  position: absolute;
  right: 13px;
  top: 19px;
  border: 8px solid transparent;
  border-top: 9px solid #5c5a58;
  border-bottom: 0;
  pointer-events: none;
}
select, .export {
  width: 100%;
  height: 46px;
  border: 2px solid #aaa6a3;
  border-radius: 5px;
  background: linear-gradient(#fefefe, #edebe8);
}
select {
  display: block;
  appearance: none;
  padding: 0 8px;
}
.export {
  grid-column: 2;
}
.groupby {
  justify-self: end;
  width: 73px;
  line-height: 28px;
}
.pair {
  display: grid;
  grid-template-columns: 230px 1fr;
}
.tick {
  display: flex;
  align-items: center;
  gap: 10px;
}
input[type="checkbox"] {
  appearance: none;
  display: grid;
  place-items: center;
  width: 28px;
  height: 28px;
  border: 2px solid #bab6b2;
  background: #fff;
}
input[type="checkbox"]:checked::before {
  content: "";
  width: 18px;
  height: 20px;
  background: #000;
  clip-path: polygon(0 48%, 16% 42%, 38% 70%, 82% 2%, 100% 8%, 46% 100%, 34% 100%);
}
.opsubset {
  margin-top: 14px;
}
.dayrow {
  display: flex;
  align-items: center;
  height: 28px;
  margin-top: 18px;
}
.dayrow span {
  width: 68px;
}
.dayrow .tick {
  width: 82px;
}
.rangerow {
  display: grid;
  grid-template-columns: 66px 124px 1fr 124px;
  column-gap: 14px;
  align-items: center;
}
.oprange {
  margin-top: 20px;
}
.viewrange {
  margin-top: 12px;
}
.slider {
  display: grid;
  height: 28px;
}
.slider input {
  grid-area: 1 / 1;
  appearance: none;
  width: 100%;
  height: 28px;
  background: none;
  pointer-events: none;
}
.slider input:first-child::-webkit-slider-runnable-track {
  height: 12px;
  background: linear-gradient(#aaa6a3 2px, #d2cfcb 2px 10px, #aaa6a3 10px);
}
.slider input::-webkit-slider-thumb {
  appearance: none;
  width: 26px;
  height: 26px;
  border: 2px solid #aaa6a3;
  border-radius: 6px;
  background: linear-gradient(#fff, #f5f2f0);
  pointer-events: auto;
}
.slider input:first-child::-webkit-slider-thumb {
  margin-top: -7px;
}
.props {
  padding: 19px 18px 0 19px;
}

.help {
  height: 397px;
  display: flex;
  flex-direction: column;
}
.browser {
  flex: 1;
  display: grid;
  grid-template: 1fr 30px / 1fr 30px;
  margin: 17px 18px 18px;
}
article {
  padding: 40px 0 0 60px;
  overflow: hidden;
  white-space: nowrap;
  background: #fff;
  color: #3e4349;
  font-family: "DejaVu Serif", serif;
}
article h2 {
  font-size: 82px;
  line-height: 94px;
}
article p {
  margin-top: 34px;
  font-size: 34px;
  line-height: 47px;
}
.vbar, .hbar {
  display: flex;
  align-items: center;
  background: #f0f0f0;
}
.vbar {
  flex-direction: column;
  padding: 12px 0;
}
.hbar {
  padding: 0 11px;
}
.vbar .thumb {
  width: 26px;
  height: 44px;
  margin: 10px 0 auto;
  background: #c1c1c1;
}
.hbar .thumb {
  width: 442px;
  height: 26px;
  margin: 0 auto 0 12px;
  background: #c1c1c1;
}
.arrow {
  border: 7px solid transparent;
}
.up {
  border-top: 0;
  border-bottom-color: #a3a3a3;
}
.down {
  border-bottom: 0;
  border-top-color: #505050;
}
.left {
  border-left: 0;
  border-right-color: #a3a3a3;
}
.right {
  border-right: 0;
  border-left-color: #505050;
}
.corner {
  background: #dcdcdc;
}

.central {
  flex: 1;
  display: flex;
  padding: 60px 18px 17px;
}
.canvas {
  flex: 1;
  background: #fff;
}
.canvas table {
  width: 336px;
  margin: 206px 0 0 74px;
  border-collapse: collapse;
  font-size: 28px;
  line-height: 34px;
  color: #262626;
}
.canvas th, .canvas td {
  height: 63px;
  padding: 0 21px 3px 0;
  border: 2px solid #1a1a1a;
  text-align: right;
  font-weight: normal;
  white-space: nowrap;
}
.canvas th {
  width: 196px;
}
.canvas td {
  padding-right: 13px;
}

.plot {
  height: 179px;
  display: flex;
  flex-direction: column;
}
.plot .panel {
  margin-right: 1px;
}
</style>
